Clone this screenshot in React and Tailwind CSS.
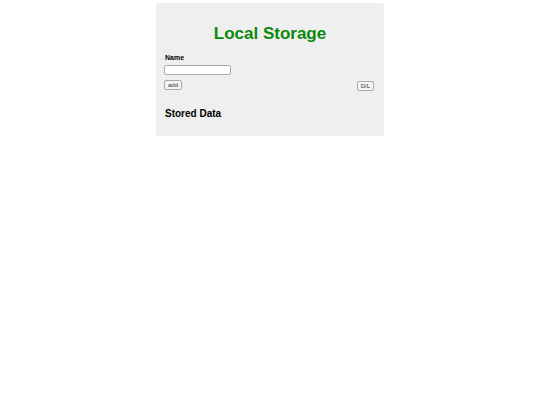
import React from 'react';

function App() {
  return (
    <div className="min-h-screen bg-white flex justify-center pt-[3px]" style={{ fontFamily: '"Liberation Sans", Arial, sans-serif' }}>
      <div className="w-[228px] h-[133px] bg-[#efefef] rounded-[3px] px-[8px] flex flex-col">
        <h1 className="text-[17px] font-bold text-[#0a8a0a] text-center mt-[22px] leading-[18px]">Local Storage</h1>
        <label className="text-[7px] font-bold text-black mt-[11px] leading-[8px] pl-px">Name</label>
        <input type="text" className="w-[67px] h-[10px] bg-white border border-[#aaa] rounded-[2px] mt-[3px]" />
        <div className="flex justify-between items-start mt-[5px]">
          <button className="text-[6px] leading-[6px] h-[10px] px-[3px] border border-[#aaa] rounded-[2px] bg-[#f4f4f4] text-[#333]">add</button>
          <button className="text-[6px] leading-[6px] h-[10px] px-[3px] mt-[1px] mr-[2px] border border-[#aaa] rounded-[2px] bg-[#f4f4f4] text-[#333]">D/L</button>
        </div>
        <div className="h-px bg-[#f5f5f5] mt-[7px] mr-[2px]" />
        <h2 className="text-[10px] font-bold text-black mt-[9px] leading-[12px] pl-px">Stored Data</h2>
      </div>
    </div>
  );
}

export default App;
